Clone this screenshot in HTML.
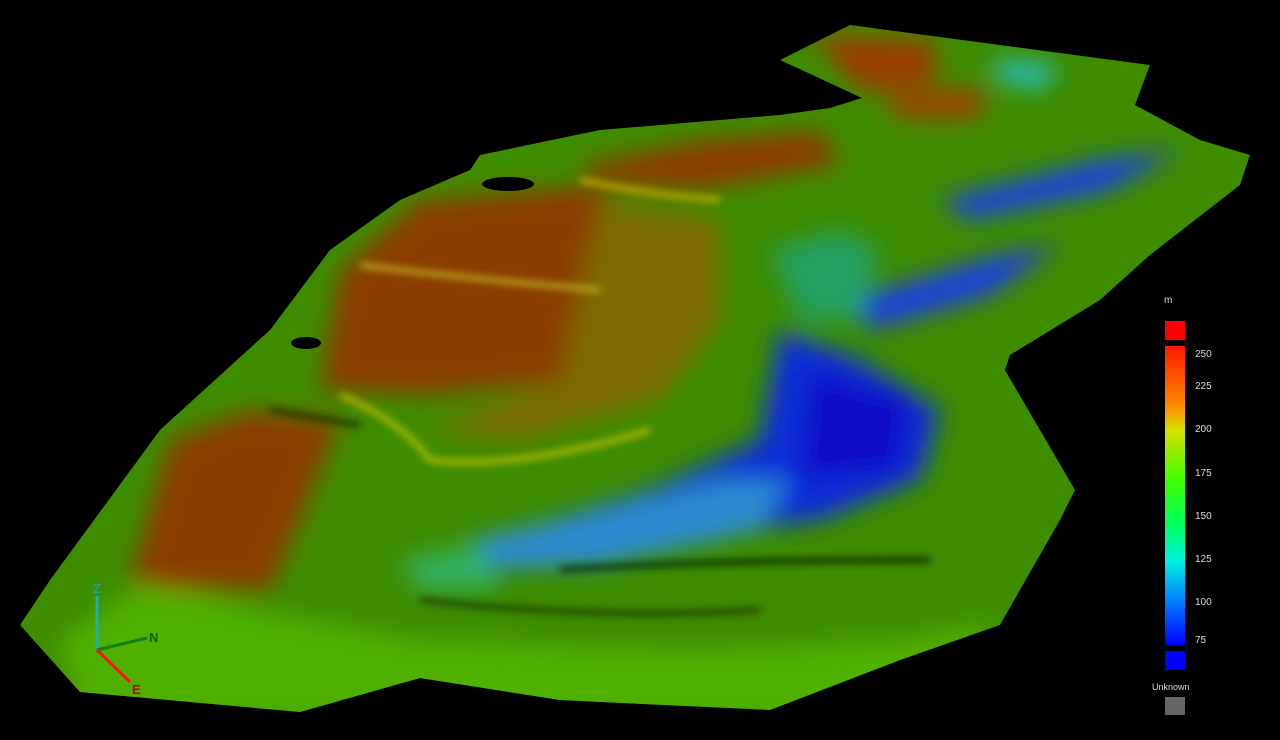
<!DOCTYPE html>
<html><head><style>
html,body{margin:0;padding:0;background:#000;width:1280px;height:740px;overflow:hidden}
.t{position:absolute;font-family:"Liberation Sans",sans-serif;color:#ddd;font-size:10px}
</style></head><body>
<svg width="1280" height="740" style="position:absolute;left:0;top:0">
<defs>
<filter id="b" x="-20%" y="-20%" width="140%" height="140%"><feGaussianBlur stdDeviation="12"/></filter>
<filter id="b2" x="-20%" y="-20%" width="140%" height="140%"><feGaussianBlur stdDeviation="4"/></filter>
<clipPath id="c"><path d="M20,625 L50,580 L160,430 L270,330 L330,250 L400,200 L470,170 L480,155 L600,130 L780,115 L830,108 L862,98 L780,60 L850,25 L1000,45 L1150,65 L1135,105 L1200,140 L1250,155 L1240,185 L1150,255 L1100,300 L1010,355 L1005,370 L1075,490 L1060,520 L1000,625 L900,660 L770,710 L560,700 L420,678 L300,712 L80,692 Z"/></clipPath>
<linearGradient id="lg" x1="0" y1="0" x2="0" y2="1">
<stop offset="0" stop-color="#ff1a00"/><stop offset="0.2" stop-color="#ff8a00"/><stop offset="0.28" stop-color="#d8e000"/><stop offset="0.45" stop-color="#3cff00"/><stop offset="0.6" stop-color="#00ff60"/><stop offset="0.72" stop-color="#00f0e0"/><stop offset="0.85" stop-color="#0080ff"/><stop offset="1" stop-color="#0000ff"/>
</linearGradient>
</defs>
<g clip-path="url(#c)">
<rect width="1280" height="740" fill="#3e8c00"/>
<g filter="url(#b)">
<path d="M60,640 L150,580 L250,610 L420,640 L700,650 L900,640 L1000,620 L900,720 L80,720Z" fill="#4fb000"/>
<path d="M130,580 L170,440 L250,410 L340,420 L300,520 L270,590 L170,590Z" fill="#8a3c05"/>
<path d="M320,390 L340,270 L420,200 L600,185 L620,300 L580,380 L430,395Z" fill="#8a3e05"/>
<path d="M580,165 L700,140 L820,130 L840,165 L700,190 L600,185Z" fill="#8a3e05"/>
<path d="M810,35 L935,40 L935,85 L860,90Z" fill="#9a3c05"/>
<path d="M880,95 L985,88 L980,118 L900,118Z" fill="#a04005"/>
<path d="M600,200 L720,220 L720,320 L660,400 L520,440 L430,430 L560,380Z" fill="#7c6a05"/>
<path d="M780,330 L860,360 L940,410 L920,480 L820,520 L700,535 L560,555 L520,530 L650,490 L760,440Z" fill="#0c2ed8"/>
<path d="M810,370 L910,400 L900,470 L800,480Z" fill="#0a10c8"/>
<path d="M470,540 L600,510 L720,480 L790,480 L760,530 L600,565 L470,570Z" fill="#2a8ad0"/>
<path d="M850,300 L1000,255 L1060,245 L990,295 L870,330Z" fill="#1a3ee0"/>
<path d="M940,200 L1100,160 L1180,150 L1110,190 L970,220Z" fill="#1a40e0"/>
<path d="M990,60 L1060,65 L1040,90 L1000,80Z" fill="#20c0c0"/>
<path d="M770,250 L840,230 L880,250 L860,320 L800,320Z" fill="#20a060"/>
<path d="M400,560 L480,545 L500,590 L420,590Z" fill="#30b060"/>
</g>
<g filter="url(#b2)" fill="none" stroke-width="5">
<path d="M360,265 Q480,280 600,290" stroke="#c0b020"/>
<path d="M340,395 Q400,420 430,460 Q520,470 650,430" stroke="#c0c010"/>
<path d="M580,180 Q650,195 720,200" stroke="#c8b010"/>
<path d="M420,600 Q600,620 760,610" stroke="#1a3a00"/>
<path d="M560,570 Q700,560 930,560" stroke="#102000"/>
<path d="M270,410 Q330,420 360,425" stroke="#1a2a00"/>
</g>
</g>
<ellipse cx="508" cy="184" rx="26" ry="7" fill="#000"/>
<ellipse cx="306" cy="343" rx="15" ry="6" fill="#000"/>
<line x1="97" y1="650" x2="97" y2="596" stroke="#20b0b0" stroke-width="3"/>
<line x1="97" y1="650" x2="147" y2="638" stroke="#108010" stroke-width="3"/>
<line x1="97" y1="650" x2="130" y2="682" stroke="#ff1010" stroke-width="3"/>
<text x="93" y="593" font-family="Liberation Sans" font-size="13" font-weight="bold" fill="#20a0a0">Z</text>
<text x="149" y="642" font-family="Liberation Sans" font-size="13" font-weight="bold" fill="#106010">N</text>
<text x="132" y="694" font-family="Liberation Sans" font-size="13" font-weight="bold" fill="#c00000">E</text>
<rect x="1165" y="321" width="20" height="19" fill="#ff0000"/>
<rect x="1165" y="346" width="20" height="299" fill="url(#lg)"/>
<rect x="1165" y="651" width="20" height="19" fill="#0000ff"/>
<rect x="1165" y="697" width="20" height="18" fill="#666"/>
</svg>
<div class="t" style="left:1164px;top:295px">m</div>
<div class="t" style="left:1195px;top:349px">250</div>
<div class="t" style="left:1195px;top:381px">225</div>
<div class="t" style="left:1195px;top:424px">200</div>
<div class="t" style="left:1195px;top:468px">175</div>
<div class="t" style="left:1195px;top:511px">150</div>
<div class="t" style="left:1195px;top:554px">125</div>
<div class="t" style="left:1195px;top:597px">100</div>
<div class="t" style="left:1195px;top:635px">75</div>
<div class="t" style="left:1152px;top:682px;font-size:9px">Unknown</div>
</body></html>
